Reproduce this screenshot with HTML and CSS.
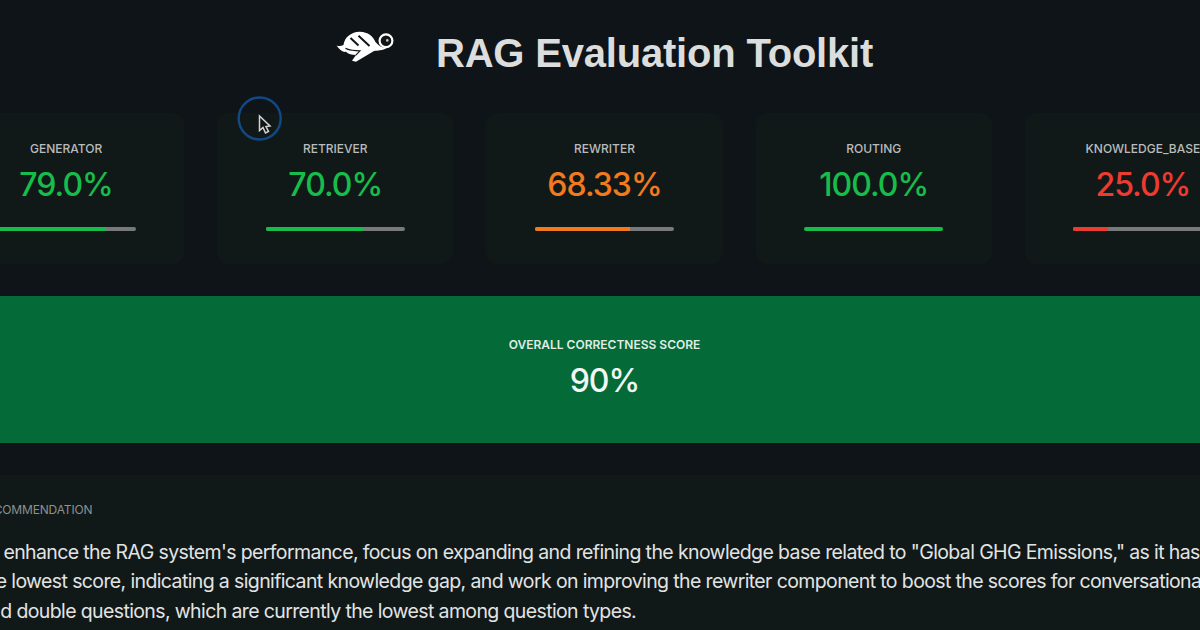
FILE: index.html
```html
<!DOCTYPE html>
<html lang="en">
<head>
    <meta charset="utf-8">
    <title>RAG Evaluation Toolkit</title>
    <link rel="stylesheet" href="styles.css">
</head>
<body>
    <div class="report">
        <header>
            <svg class="logo" viewBox="0 0 60 36" width="60" height="36">
                <path d="M1.5 17.5 C4 18.5 6.5 18 8.5 17 C9.5 9 17 3.5 25 3.8 C33 4 38 8.5 40.5 14 C43 17 47 20.5 52 19.8 C48 23 42 22.5 39 23 L21 33.8 L17 32.8 L21 27 C17 27 13 26 11 23.8 C8 24.5 5 22.5 1.5 17.5 Z" fill="#fff"/>
                <circle cx="51" cy="12.8" r="6.4" fill="#111516" stroke="#fff" stroke-width="2.2"/>
                <circle cx="52.3" cy="12.4" r="1.3" fill="#c8caca"/>
                <path d="M15.5 10 L23.5 17.5 M23.5 7.8 L34.5 18" fill="none" stroke="#111516" stroke-width="2"/>
                <path d="M10.5 20.3 C15 23 19 22.3 25 22.8 L20.8 27.2" fill="none" stroke="#111516" stroke-width="1.2"/>
            </svg>
            <h1>RAG Evaluation Toolkit</h1>
        </header>

        <div class="cards">
            <div class="card good">
                <div class="label">GENERATOR</div>
                <div class="value">79.0%</div>
                <div class="bar"><div class="fill" style="width: 79%"></div></div>
            </div>
            <div class="card good">
                <div class="label">RETRIEVER</div>
                <div class="value">70.0%</div>
                <div class="bar"><div class="fill" style="width: 70%"></div></div>
            </div>
            <div class="card medium">
                <div class="label">REWRITER</div>
                <div class="value">68.33%</div>
                <div class="bar"><div class="fill" style="width: 68.33%"></div></div>
            </div>
            <div class="card good">
                <div class="label">ROUTING</div>
                <div class="value">100.0%</div>
                <div class="bar"><div class="fill" style="width: 100%"></div></div>
            </div>
            <div class="card bad">
                <div class="label">KNOWLEDGE_BASE</div>
                <div class="value">25.0%</div>
                <div class="bar"><div class="fill" style="width: 25%"></div></div>
            </div>
        </div>

        <div class="overall">
            <div class="label">OVERALL CORRECTNESS SCORE</div>
            <div class="value">90%</div>
        </div>

        <div class="recommendation">
            <div class="label">RECOMMENDATION</div>
            <p>To enhance the RAG system's performance, focus on expanding and refining the knowledge base related to "Global GHG Emissions," as it has<br>
            the lowest score, indicating a significant knowledge gap, and work on improving the rewriter component to boost the scores for conversational<br>
            and double questions, which are currently the lowest among question types.</p>
        </div>
    </div>

    <!-- mouse pointer with click ring -->
    <div class="pointer">
        <svg viewBox="0 0 46 46" width="46" height="46">
            <circle cx="22.7" cy="23.5" r="21" fill="none" stroke="#114987" stroke-width="2.4"/>
            <path d="M22.5 21 V35.5 L26 32.5 L28.5 38 L31.5 36.5 L29 31.5 L33 31 Z" fill="#111516" stroke="#d4d4d4" stroke-width="1.5"/>
        </svg>
    </div>
</body>
</html>
```
FILE: styles.css
```css
body {
    margin: 0;
    height: 630px;
    overflow: hidden;
    position: relative;
    background-color: #0f1418;
    color: #e2e4e4;
    font-family: Inter, sans-serif;
}

/* the report is wider than the window and runs off both sides */
.report {
    width: 1313px;
    margin-left: -52px;
}

header {
    display: flex;
    align-items: flex-start;
    height: 113px;
    padding-left: 387px;
}

.logo {
    margin-top: 28px;
}

h1 {
    margin: 30px 0 0 41px;
    font: bold 40px/46px "Liberation Sans", Arial, sans-serif;
    letter-spacing: -0.2px;
    color: #dcdddd;
    white-space: nowrap;
}

.cards {
    display: grid;
    grid-template-columns: repeat(5, 1fr);
    gap: 33px;
}

.card {
    display: flex;
    flex-direction: column;
    align-items: center;
    height: 151px;
    box-sizing: border-box;
    padding-top: 26px;
    border-radius: 12px;
    background-color: #111918;
}

.label {
    font-size: 12px;
    line-height: 20px;
    font-weight: 500;
    color: #b9bcbc;
}

.value {
    font-size: 32px;
    line-height: 40px;
    font-weight: 500;
    letter-spacing: -1px;
    margin-top: 6px;
}

.bar {
    width: 139px;
    height: 4px;
    margin-top: 22px;
    border-radius: 2px;
    background-color: #77797a;
    overflow: hidden;
}

.fill {
    height: 100%;
    background-color: currentColor;
}

.good .value, .good .bar {
    color: #17bd4b;
}

.medium .value, .medium .bar {
    color: #f27a1e;
}

.bad .value, .bad .bar {
    color: #ec3b30;
}

.overall {
    height: 147px;
    margin-top: 31.5px;
    box-sizing: border-box;
    padding-top: 39px;
    text-align: center;
    background-color: #046a38;
}

.overall .label {
    color: #e0ede5;
    font-weight: 600;
}

.overall .value {
    color: #f1f7f3;
}

.recommendation {
    height: 130px;
    margin-top: 32px;
    padding: 25px 0 0 31px;
    background-color: #111918;
}

.recommendation .label {
    color: #8c9090;
    font-weight: 400;
    letter-spacing: -0.15px;
}

.recommendation p {
    margin: 18px 0 0;
    font-size: 19.5px;
    line-height: 29.8px;
    letter-spacing: -0.62px;
    text-indent: -2px;
    white-space: nowrap;
}

.pointer {
    position: absolute;
    left: 237px;
    top: 95px;
}
```
